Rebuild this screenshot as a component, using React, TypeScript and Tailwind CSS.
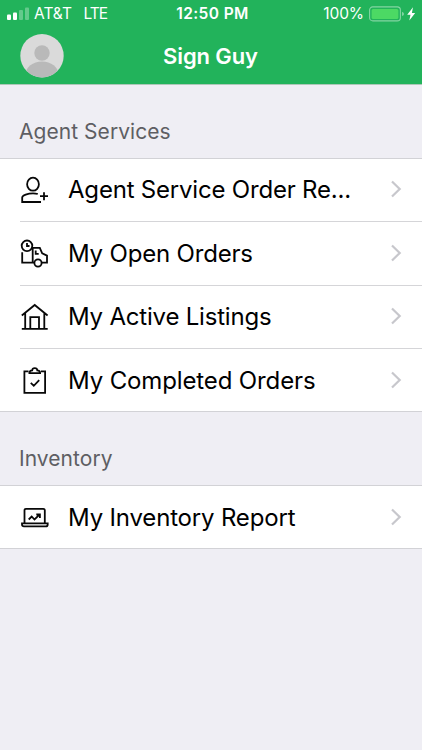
import type { ReactNode } from "react";

function Icon({ children }: { children: ReactNode }) {
  return (
    <svg className="-mt-px h-[30px] w-[30px] shrink-0" viewBox="0 0 30 30" fill="none" stroke="#080808" strokeWidth="1.8">
      {children}
    </svg>
  );
}

const userIcon = (
  <Icon>
    <ellipse cx="13" cy="9.2" rx="5.9" ry="6.5" />
    <path d="M21 27H2.2v-4.4c0-2.4 5.7-4.3 10.8-4.3 1.8 0 3.4.2 4.8.7M24 17.2v8M20 21.2h8" />
  </Icon>
);

const truckIcon = (
  <Icon>
    <circle cx="7" cy="7.8" r="5.3" />
    <path d="M7 5v3h2.5M2.2 14.3v10.4h12.2M12.7 24.7V9.8h7.1l2.4 5.6 4.8 2.2v7.1h-5.4M15.7 12.5v3.3h3" />
    <circle cx="18" cy="25" r="3.6" />
  </Icon>
);

const houseIcon = (
  <Icon>
    <path d="M1.8 14.5 14.7 4l12.9 10.5M5.2 12v15.8M24.3 12v15.8M1.8 27.8h25.9M10.3 27.8V16.2H19v11.6" />
  </Icon>
);

const clipboardIcon = (
  <Icon>
    <path d="M8.5 6.3H4.4v21.5h20.7V6.3h-4.2M9.4 8.1c0-2.3 1.1-2.7 2.8-2.8.2-3 4.9-3 5.1 0 1.8.1 2.8.5 2.8 2.8zM10.8 17.8l3 3 5.4-5.7" />
  </Icon>
);

const laptopIcon = (
  <Icon>
    <path d="M4.5 21.4V8.3q0-1.5 1.5-1.5h17.3q1.5 0 1.5 1.5v13.1M2 21.4h25.7v1q0 2-2 2H4q-2 0-2-2zM8.7 17.5l3-3 2.8 3 5-4.8M16.3 12.5h3.6v3.6" />
  </Icon>
);

function Row({ icon, label, spacing, last }: { icon: ReactNode; label: string; spacing: string; last?: boolean }) {
  return (
    <div className="flex h-[63.4px] pl-5">
      <div className={`flex flex-1 items-center pr-5 ${last ? "" : "border-b border-[#d5d5d8]"}`}>
        {icon}
        <span className={`ml-[18px] flex-1 whitespace-nowrap text-[24px] leading-[30px] text-black ${spacing}`}>{label}</span>
        <svg className="-mt-[1.5px] h-[18px] w-3" viewBox="0 0 12 18" fill="none" stroke="#c7c7cc" strokeWidth="2.2">
          <path d="M2 1.5 9.7 9 2 16.5" />
        </svg>
      </div>
    </div>
  );
}

function SectionTitle({ children }: { children: ReactNode }) {
  return (
    <h2 className="flex h-[73px] items-end pb-[12px] pl-[19px] text-[21px] leading-[28px] font-normal tracking-[0.05px] text-[#5e5e63]">
      {children}
    </h2>
  );
}

export default function App() {
  return (
    <div className="h-[750px] w-[422px] overflow-hidden bg-[#efeef4] font-['Inter','Liberation_Sans',sans-serif]">
      <header className="h-[85px] border-b border-[#aec7b8] bg-[#22b35b] text-white">
        <div className="grid h-[27px] grid-cols-[1fr_auto_1fr] items-center px-[7px] text-[15.5px] leading-[20px]">
          <div className="flex items-center">
            <svg className="h-[14px] w-[22px]" viewBox="0 0 22 14" fill="white">
              <rect x="0" y="7.5" width="4" height="5.5" rx="1" />
              <rect x="6" y="5.5" width="4" height="7.5" rx="1" />
              <rect x="12" y="3" width="4" height="10" rx="1" opacity=".3" />
              <rect x="18" y="0.5" width="4" height="12.5" rx="1" opacity=".3" />
            </svg>
            <span className="ml-[5px]">AT&amp;T</span>
            <span className="ml-[11.5px] tracking-[-1px]">LTE</span>
          </div>
          <span className="pl-[3px] font-semibold tracking-[0.4px]">12:50 PM</span>
          <div className="flex items-center justify-end">
            <span className="tracking-[-0.1px]">100%</span>
            <svg className="ml-[5px] h-[16px] w-[46px]" viewBox="0 0 46 16">
              <rect x="0.6" y="0.9" width="30.8" height="14" rx="3.2" fill="none" stroke="#83d5a3" strokeWidth="1.1" />
              <rect x="2.6" y="2.9" width="26.8" height="10" rx="1.5" fill="#4cd964" />
              <path d="M33 5.8q2 .7 2 2.1t-2 2.1z" fill="#83d5a3" />
              <path d="m44 1.2-5.8 7.6h3.3l-1.2 5.6 6-7.5h-3.4z" fill="white" />
            </svg>
          </div>
        </div>
        <div className="grid h-[57px] grid-cols-[1fr_auto_1fr] items-center pl-5">
          <svg className="h-11 w-11" viewBox="0 0 44 44">
            <defs>
              <clipPath id="avatar"><circle cx="22" cy="21.7" r="21.7" /></clipPath>
            </defs>
            <g clipPath="url(#avatar)">
              <rect width="44" height="44" fill="#dadada" />
              <circle cx="22" cy="19" r="7.7" fill="#b9b9b9" />
              <ellipse cx="22" cy="40.5" rx="16.5" ry="13" fill="#b9b9b9" />
            </g>
          </svg>
          <h1 className="mr-[21px] text-[22px] leading-[28px] font-semibold tracking-[-0.1px]">Sign Guy</h1>
          <span />
        </div>
      </header>
      <section>
        <SectionTitle>Agent Services</SectionTitle>
        <div className="h-[254px] border-y border-[#d2d2d6] bg-white">
          <Row icon={userIcon} label="Agent Service Order Re..." spacing="tracking-[-0.2px]" />
          <Row icon={truckIcon} label="My Open Orders" spacing="tracking-[-0.18px]" />
          <Row icon={houseIcon} label="My Active Listings" spacing="tracking-[-0.2px]" />
          <Row icon={clipboardIcon} label="My Completed Orders" spacing="tracking-[-0.13px]" last />
        </div>
      </section>
      <section>
        <SectionTitle>Inventory</SectionTitle>
        <div className="h-[64px] border-y border-[#d2d2d6] bg-white">
          <Row icon={laptopIcon} label="My Inventory Report" spacing="tracking-[-0.17px]" last />
        </div>
      </section>
    </div>
  );
}
